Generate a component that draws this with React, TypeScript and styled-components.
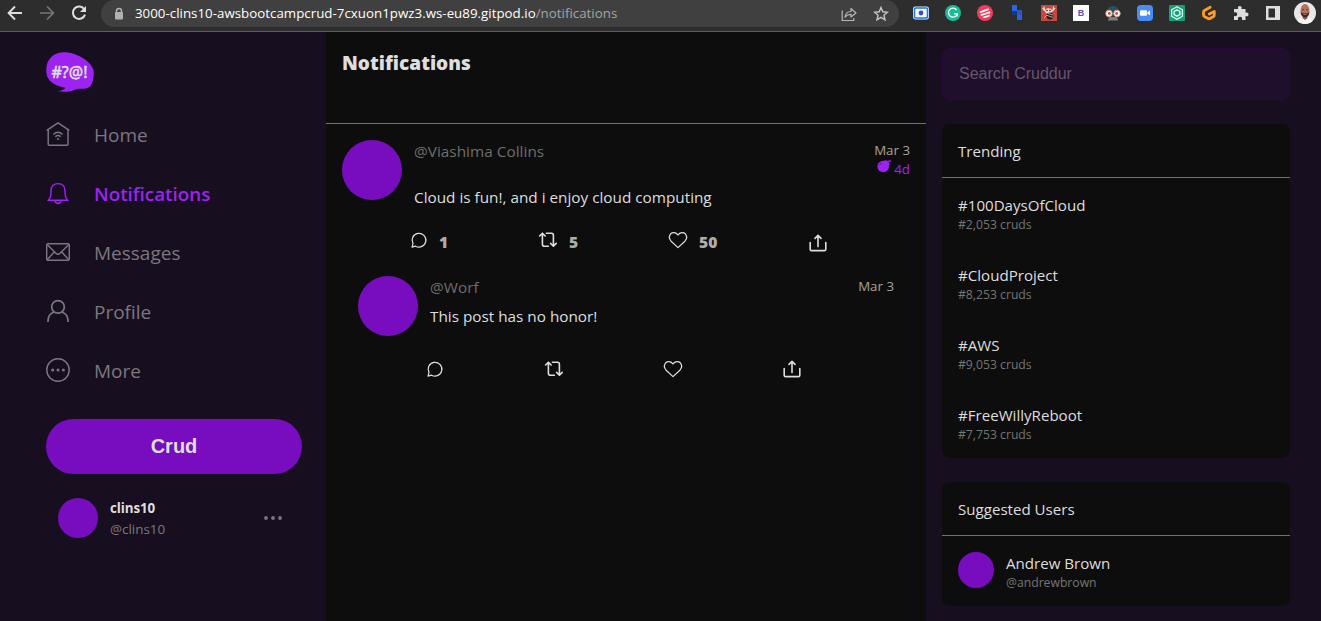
import React from "react";
import styled, { createGlobalStyle } from "styled-components";

const GlobalStyle = createGlobalStyle`
  * { box-sizing: border-box; }
  html, body { margin: 0; background: #170e1f; }
  body { font-family: "Open Sans", "Noto Sans", sans-serif; overflow: hidden; }
  svg { display: block; flex: none; }
`;

const Screen = styled.div`
  width: 1321px;
  height: 621px;
  display: flex;
  flex-direction: column;
  overflow: hidden;
`;

/* ---------- browser bar ---------- */
const BrowserBar = styled.header`
  height: 32px;
  flex: none;
  display: flex;
  align-items: flex-start;
  background: #2d2d2d;
  border-bottom: 1px solid #5d5d5d;
`;
const NavButtons = styled.div`
  width: 101px;
  height: 26px;
  padding-left: 7px;
  display: flex;
  align-items: center;
  gap: 16px;
`;
const AddressBar = styled.div`
  width: 798px;
  height: 27px;
  padding: 0 10px 0 12px;
  display: flex;
  align-items: center;
  background: #404040;
  border-radius: 14px;
`;
const Url = styled.div`
  flex: 1;
  margin-left: 10px;
  padding-bottom: 2px;
  font-size: 13.3px;
  line-height: 24px;
  letter-spacing: 0.02px;
  color: #fff;
  white-space: nowrap;
  span { color: #a5a5a5; }
`;
const AddressActions = styled.div`
  display: flex;
  gap: 16px;
`;
const Extensions = styled.div`
  height: 26px;
  flex: 1;
  padding-left: 13px;
  display: flex;
  align-items: center;
  gap: 14px;
`;
const Ext = styled.div`
  width: 18px;
  height: 18px;
  flex: none;
  display: flex;
  align-items: center;
  justify-content: center;
`;
const LetterTile = styled.div`
  width: 16px;
  height: 16px;
  background: #fff;
  color: #5550b5;
  font: bold 9px/16px "Liberation Sans", sans-serif;
  text-align: center;
`;

/* ---------- page ---------- */
const Page = styled.main`
  flex: 1;
  min-height: 0;
  display: flex;
  background: #170e1f;
`;
const Sidebar = styled.nav`
  width: 326px;
  flex: none;
  padding: 20px 24px 0 46px;
  display: flex;
  flex-direction: column;
`;
const NavList = styled.div`
  margin-top: 14px;
  display: flex;
  flex-direction: column;
`;
const NavItem = styled.a<{ $active?: boolean }>`
  height: 59px;
  display: flex;
  align-items: center;
  gap: 24px;
  font-size: ${p => (p.$active ? "18.8px" : "19px")};
  font-weight: ${p => (p.$active ? 600 : 400)};
  line-height: 27px;
  color: ${p => (p.$active ? "#9d23f0" : "#7c777e")};
  svg { margin-bottom: 3px; }
`;
const CrudButton = styled.button`
  height: 55px;
  margin-top: 18px;
  padding: 0;
  border: 0;
  border-radius: 28px;
  background: #780dc0;
  color: #dedede;
  font: bold 20px/55px "Liberation Sans", sans-serif;
`;
const ProfileBox = styled.div`
  margin-top: 22px;
  padding: 0 20px 0 12px;
  display: flex;
  align-items: center;
`;
const Avatar = styled.div<{ $size: number }>`
  width: ${p => p.$size}px;
  height: ${p => p.$size}px;
  flex: none;
  border-radius: 50%;
  background: #780dc0;
`;
const ProfileText = styled.div`
  flex: 1;
  margin-left: 12px;
  padding-top: 2px;
`;
const DisplayName = styled.div`
  font-size: 13.4px;
  font-weight: 700;
  line-height: 21px;
  letter-spacing: -0.1px;
  color: #dedede;
`;
const ProfileHandle = styled.div`
  font-size: 13.4px;
  line-height: 21px;
  color: #7c777e;
`;

const Feed = styled.section`
  width: 600px;
  flex: none;
  background: #0d0d0d;
`;
const FeedHeading = styled.div`
  height: 92px;
  padding: 16px;
  border-bottom: 1px solid #777067;
  font-size: 19px;
  font-weight: 800;
  line-height: 30px;
  letter-spacing: 0.02px;
  color: #dedede;
`;
const Activity = styled.article<{ $reply?: boolean }>`
  height: ${p => (p.$reply ? 132 : 136)}px;
  padding: ${p => (p.$reply ? "16px 32px 0" : "16px 16px 0")};
  display: flex;
  flex-direction: column;
`;
const ActivityHead = styled.div`
  height: 60px;
  display: flex;
`;
const ActivityBody = styled.div`
  flex: 1;
  margin-left: 12px;
`;
const Handle = styled.div`
  font-size: 15.3px;
  line-height: 23px;
  letter-spacing: 0.04px;
  color: #6e6e6e;
`;
const Message = styled.div<{ $gap: number }>`
  margin-top: ${p => p.$gap}px;
  font-size: 15.3px;
  line-height: 23px;
  color: #dedede;
  white-space: nowrap;
`;
const Times = styled.div`
  padding-top: 1px;
  display: flex;
  flex-direction: column;
  align-items: flex-end;
  font-size: 13.3px;
  line-height: 19px;
  color: #a9a29b;
`;
const Expires = styled.div`
  display: flex;
  gap: 3px;
  color: #9d23f0;
`;
const Actions = styled.div<{ $counts?: boolean }>`
  width: ${p => (p.$counts ? 417 : 375)}px;
  margin: ${p => (p.$counts ? "31px 0 0 68px" : "24px 0 0 68px")};
  height: 24px;
  display: flex;
  justify-content: space-between;
`;
const Action = styled.div<{ $width?: number }>`
  width: ${p => (p.$width ? `${p.$width}px` : "auto")};
  display: flex;
  gap: 11px;
`;
const Count = styled.span`
  font-size: 15.7px;
  font-weight: 800;
  line-height: 22px;
  color: #adadad;
`;
const Drop = styled.span`
  padding-top: 3px;
`;

const Aside = styled.aside`
  flex: 1;
  padding: 16px 31px 0 16px;
`;
const Search = styled.input`
  display: block;
  width: 348px;
  height: 52px;
  padding: 0 16px;
  border: 1px solid #280b3b;
  border-radius: 8px;
  outline: 0;
  background: #200e2d;
  font: 16px "Liberation Sans", sans-serif;
  &::placeholder { color: #645769; opacity: 1; }
`;
const Card = styled.section<{ $height: number }>`
  height: ${p => p.$height}px;
  margin-top: 24px;
  border-radius: 8px;
  background: #0d0d0d;
`;
const CardTitle = styled.div`
  height: 54px;
  padding: 16px 16px 0;
  border-bottom: 1px solid #777067;
  font-size: 15.1px;
  line-height: 23px;
  color: #dedede;
`;
const Trend = styled.div`
  height: 70px;
  padding: 17px 16px 0;
`;
const ItemTitle = styled.div`
  font-size: 15.1px;
  line-height: 21px;
  color: #dedede;
`;
const ItemSub = styled.div`
  font-size: 12.2px;
  line-height: 17px;
  color: #757575;
`;
const Suggested = styled.div`
  padding: 16px;
  display: flex;
  gap: 12px;
`;
const SuggestedText = styled.div`
  padding-top: 1px;
`;

const ReplyIcon = () => (
  <svg width="18" height="18" viewBox="0 0 18 18" fill="none" stroke="#dedede" strokeWidth="1.25" strokeLinejoin="round">
    <path d="M3 12.6A6.9 6.9 0 1 1 5.6 15.2L2 16.1Z" />
  </svg>
);
const RepostIcon = () => (
  <svg width="20" height="18" viewBox="0 0 20 18" fill="none" stroke="#dedede" strokeWidth="1.6" strokeLinecap="round" strokeLinejoin="round">
    <path d="M1.6 5L4.4 2.2L7.2 5M4.4 2.6V13.2Q4.4 15.2 6.4 15.2H10.4" />
    <path d="M8.4 2.2H13.4Q15.4 2.2 15.4 4.2V14.8M12.6 12.4L15.4 15.2L18.2 12.4" />
  </svg>
);
const HeartIcon = () => (
  <svg width="20" height="18" viewBox="0 0 20 18" fill="none" stroke="#dedede" strokeWidth="1.25" strokeLinejoin="round">
    <path d="M10 4C8 .9 4.5 1 2.7 2.8C.9 5 1.1 8 3.1 10.2L10 16.6L16.9 10.2C18.9 8 19.1 5 17.3 2.8C15.5 1 12 .9 10 4Z" />
  </svg>
);
const ShareIcon = () => (
  <svg width="18" height="18" viewBox="0 0 18 18" fill="none" stroke="#dedede" strokeWidth="1.6" strokeLinecap="round" strokeLinejoin="round">
    <path d="M1.2 8.5V15.2Q1.2 16.6 2.6 16.6H15.4Q16.8 16.6 16.8 15.2V8.5M9 12.6V1.6M6 4.4L9 1.4L12 4.4" />
  </svg>
);
const BombIcon = () => (
  <svg width="14" height="14" viewBox="0 0 14 14" fill="#9d23f0">
    <circle cx="6.2" cy="6.5" r="5.8" />
    <path d="M7 .5L9.6 .2L12.6 3L12.2 6L10.6 7Z" />
    <path d="M10 2.2Q11 .6 13.9 1.1" fill="none" stroke="#9d23f0" strokeWidth="1.5" />
    <path d="M2.4 5.6Q3 3.4 5 3" fill="none" stroke="#5a128c" strokeWidth=".9" />
  </svg>
);

const Logo = () => (
  <svg width="48" height="40" viewBox="0 0 48 40">
    <path d="M17 .2C28-.7 45 8 47.6 18.5C48 25 47 32 43.4 35C39 37.8 34 36.2 30 37.2C24 40.2 17 40 11.4 39.2C15 38.8 18.5 37.5 19.2 35.7C11 34.5 3.5 30.5 1 24C-1.8 11 4 1.2 17 .2Z" fill="#9d23f0" />
    <text x="5.5" y="26" textLength="36" lengthAdjust="spacingAndGlyphs" fill="#dedede" stroke="#dedede" strokeWidth=".6" fontFamily="Noto Sans" fontSize="17" fontWeight="400">#?@!</text>
  </svg>
);

const navIcons: Record<string, React.ReactNode> = {
  Home: (
    <>
      <path d="M.7 8.4L12 .9L23.3 8.4M2.2 7.5V22.2Q2.2 23.2 3.2 23.2H21Q22 23.2 22 22.2V7.5" />
      <path d="M7.4 12.5Q12 8.2 16.6 12.5M9.3 14.8Q12 12.4 14.7 14.8" />
      <circle cx="12" cy="17" r="1" fill="currentColor" stroke="none" />
    </>
  ),
  Notifications: (
    <g transform="translate(0 .8)">
      <path d="M2.5 18.4C4.5 16.2 5 14.5 5 11V9C5 4.6 7.6 1.8 12 1.8S19 4.6 19 9V11C19 14.5 19.5 16.2 21.5 18.4Z" />
      <path d="M9 18.8Q9.4 21.7 12 21.7T15 18.8" />
    </g>
  ),
  Messages: (
    <>
      <rect x=".7" y="3.7" width="22.6" height="16.6" rx="1.4" />
      <path d="M1.2 4.4L9.9 13.2Q12 15.2 14.1 13.2L22.8 4.4M1.2 19.7L8.5 11.8M22.8 19.7L15.5 11.8" />
    </>
  ),
  Profile: (
    <g strokeWidth="1.7" transform="translate(0 .6)">
      <circle cx="12" cy="7.3" r="6.3" />
      <path d="M1.9 22.3C1.9 17 4.4 13.5 8.2 12.4M22.1 22.3C22.1 17 19.6 13.5 15.8 12.4" />
    </g>
  ),
  More: (
    <>
      <circle cx="12" cy="12" r="11.2" />
      <g fill="currentColor" stroke="none">
        <circle cx="6.6" cy="12" r="1.5" /><circle cx="12" cy="12" r="1.5" /><circle cx="17.4" cy="12" r="1.5" />
      </g>
    </>
  ),
};

const NavIcon = ({ name }: { name: string }) => (
  <svg width="24" height="24" viewBox="0 0 24 24" fill="none" stroke="currentColor" strokeWidth="1.45">
    {navIcons[name]}
  </svg>
);

const trends = [
  ["#100DaysOfCloud", "#2,053 cruds"],
  ["#CloudProject", "#8,253 cruds"],
  ["#AWS", "#9,053 cruds"],
  ["#FreeWillyReboot", "#7,753 cruds"],
];

const Chrome = () => (
  <BrowserBar>
    <NavButtons>
      <svg width="16" height="16" viewBox="0 0 16 16" fill="none" stroke="#dfdfdf" strokeWidth="1.9"><path d="M15 8H2M8 1.5L1.6 8L8 14.5" /></svg>
      <svg width="16" height="16" viewBox="0 0 16 16" fill="none" stroke="#777" strokeWidth="1.7"><path d="M1 8H14M8 1.5L14.4 8L8 14.5" /></svg>
      <svg width="16" height="16" viewBox="0 0 16 16" fill="none" stroke="#dfdfdf" strokeWidth="2"><path d="M13.4 4.5A6.2 6.2 0 1 0 14 9.6" /><path d="M15 1V7H9Z" fill="#dfdfdf" stroke="none" /></svg>
    </NavButtons>
    <AddressBar>
      <svg width="12" height="14" viewBox="0 0 12 14"><path d="M3.5 6V4A2.5 2.5 0 0 1 8.5 4V6" fill="none" stroke="#aeb1b5" strokeWidth="1.5" /><rect x="2" y="5" width="8" height="7.5" rx="1" fill="#aeb1b5" /></svg>
      <Url>3000-clins10-awsbootcampcrud-7cxuon1pwz3.ws-eu89.gitpod.io<span>/notifications</span></Url>
      <AddressActions>
        <svg width="16" height="16" viewBox="0 0 16 16" fill="none" stroke="#b5b5b5" strokeWidth="1.2" strokeLinejoin="round"><path d="M1.2 4.5V14.5H12.8V12M4 11C4.5 7.5 6.5 5.5 10 5.5V2.5L15 7L10 11V8.3C7.3 8.3 5.5 9.2 4 11Z" /></svg>
        <svg width="16" height="16" viewBox="0 0 16 16" fill="none" stroke="#c5c5c5" strokeWidth="1.4"><path d="M8 1.5L9.8 5.8L14.5 6.2L10.9 9.2L12 13.8L8 11.3L4 13.8L5.1 9.2L1.5 6.2L6.2 5.8Z" /></svg>
      </AddressActions>
    </AddressBar>
    <Extensions>
      <Ext><svg width="16" height="14" viewBox="0 0 16 14"><rect y=".6" width="16" height="12.8" rx="2.4" fill="#e8f2ff" /><rect x="1.5" y="2" width="13" height="10" rx="1.2" fill="#f5faff" stroke="#1878ee" strokeWidth="1.6" /><circle cx="8" cy="7" r="2.4" fill="#4649ba" /></svg></Ext>
      <Ext><svg width="16" height="16" viewBox="0 0 16 16"><circle cx="8" cy="8" r="8" fill="#18bd98" /><path d="M11.6 5A4.5 4.5 0 1 0 12.3 8.8H9M12.3 8.2V11.5" fill="none" stroke="#fff" strokeWidth="1.3" /></svg></Ext>
      <Ext><svg width="16" height="16" viewBox="0 0 16 16"><circle cx="8" cy="8" r="8" fill="#f8395c" /><path d="M2.6 6.6L11.4 3.2L12 5L3.2 8.2ZM3.4 9.4L13 6.2L13.4 8L4 11.1ZM5.4 12L13 9.6L12.4 11.4L7 13.2Z" fill="#fff" /></svg></Ext>
      <Ext><svg width="12" height="16" viewBox="0 0 12 16"><path d="M1 0H6V6H1Z" fill="#2466e5" /><path d="M6 5H11V10H6Z" fill="#3158b7" /><path d="M1 6H6V10H1Z" fill="#1c377b" /><path d="M6 10H11V15H6Z" fill="#2860df" /></svg></Ext>
      <Ext><svg width="16" height="16" viewBox="0 0 16 16"><rect width="16" height="16" fill="#c7473b" /><path d="M1.5 3L3.5 5.5L6 6.5M14 3L12 5.5L10 6.5M3 1.5L3.5 5M12.5 1.5L12 5" stroke="#f3d9d3" strokeWidth="1.2" fill="none" /><ellipse cx="7.5" cy="6" rx="3.4" ry="2.8" fill="#f3d9d3" /><circle cx="6" cy="5.5" r=".8" fill="#28201f" /><circle cx="9" cy="5.5" r=".8" fill="#28201f" /><ellipse cx="9" cy="11" rx="3.4" ry="3.6" fill="#28201f" /><path d="M6 10.4L12 12.4M7 8.4L12 10M3 13L6 10" stroke="#e8bcae" strokeWidth=".8" /></svg></Ext>
      <Ext><LetterTile>B</LetterTile></Ext>
      <Ext><svg width="16" height="16" viewBox="0 0 16 16"><path d="M2 8Q2 1 8 1T14 8V11H2Z" fill="#285260" /><path d="M4 12H12L13 15.5H3Z" fill="#79807d" /><circle cx="4" cy="8.5" r="3.2" fill="#fff" stroke="#e0a58f" /><circle cx="12" cy="8.5" r="3.2" fill="#fff" stroke="#e0a58f" /><circle cx="4.4" cy="8.5" r="1.4" fill="#c64c35" /><circle cx="11.6" cy="8.5" r="1.4" fill="#c64c35" /></svg></Ext>
      <Ext><svg width="16" height="16" viewBox="0 0 16 16"><rect width="16" height="16" rx="4" fill="#468df4" /><rect x="3" y="5.2" width="7" height="5.6" rx="1.2" fill="#fff" /><path d="M10.5 7.2L13 5.4V10.6L10.5 8.8Z" fill="#fff" /></svg></Ext>
      <Ext><svg width="16" height="16" viewBox="0 0 16 16" fill="none" stroke="#d8fff1"><rect width="16" height="16" rx="1" fill="#149e79" stroke="none" /><path d="M8 1.7L13.4 4.8V11.2L8 14.3L2.6 11.2V4.8Z" strokeWidth="1.3" /><path d="M8 4.8L10.9 6.4V9.6L8 11.2L5.1 9.6V6.4Z" strokeWidth="1.4" /></svg></Ext>
      <Ext><svg width="16" height="16" viewBox="0 0 16 16" fill="none" stroke="#ff9c23" strokeWidth="2.8" strokeLinecap="round" strokeLinejoin="round"><path d="M9.2 2.3L3.4 5.4Q2.5 6 2.5 7V10Q2.5 11 3.4 11.5L7 13.5Q8 14 9 13.5L12.5 11.5Q13.3 11 13.3 10V6.5L8.2 9" /></svg></Ext>
      <Ext><svg width="16" height="16" viewBox="0 0 16 16"><path d="M1 4H5.2C4.4 2.4 5.2 1 6.8 1S9.2 2.4 8.4 4H12.5V7.8C14 7 15.5 7.8 15.5 9.4S14 11.8 12.5 11V15H9C9.6 13 8.6 11.8 7 11.8S4.5 13 5 15H1V11C3 11.5 4.2 10.7 4.2 9.2S3 6.9 1 7.5Z" fill="#dedede" /></svg></Ext>
      <Ext><svg width="14" height="14" viewBox="0 0 14 14"><path fillRule="evenodd" d="M0 0H14V14H0ZM2.5 2.5V11.5H9V2.5Z" fill="#dedede" /></svg></Ext>
      <Ext><svg width="22" height="22" viewBox="0 0 22 22"><circle cx="11" cy="11" r="11" fill="#e8e8e9" /><path d="M3.3 18.7Q5 15.5 8 15H14Q17 15.5 18.7 18.7A11 11 0 0 1 3.3 18.7Z" fill="#f7f7f7" /><path d="M8.5 13H13.5V16L11 18L8.5 16Z" fill="#8b5549" /><ellipse cx="11" cy="8.5" rx="4.5" ry="6.5" fill="#b07462" /><path d="M6.6 9.6Q7.5 11.6 9 11.4H13Q14.5 11.6 15.4 9.6Q15.2 15.3 11 15.3T6.6 9.6Z" fill="#3b2525" /><path d="M9.4 12.6H12.6" stroke="#b07462" /><path d="M8.2 7.6H10M12 7.6H13.8" stroke="#4b2c28" strokeWidth=".8" /></svg></Ext>
    </Extensions>
  </BrowserBar>
);

export default function App() {
  return (
    <Screen>
      <GlobalStyle />
      <Chrome />
      <Page>
        <Sidebar>
          <Logo />
          <NavList>
            {["Home", "Notifications", "Messages", "Profile", "More"].map(name => (
              <NavItem key={name} $active={name === "Notifications"}>
                <NavIcon name={name} />
                {name}
              </NavItem>
            ))}
          </NavList>
          <CrudButton>Crud</CrudButton>
          <ProfileBox>
            <Avatar $size={40} />
            <ProfileText>
              <DisplayName>clins10</DisplayName>
              <ProfileHandle>@clins10</ProfileHandle>
            </ProfileText>
            <svg width="18" height="4" viewBox="0 0 18 4" fill="#7c777e"><circle cx="2" cy="2" r="1.9" /><circle cx="9" cy="2" r="1.9" /><circle cx="16" cy="2" r="1.9" /></svg>
          </ProfileBox>
        </Sidebar>

        <Feed>
          <FeedHeading>Notifications</FeedHeading>
          <Activity>
            <ActivityHead>
              <Avatar $size={60} />
              <ActivityBody>
                <Handle>@Viashima Collins</Handle>
                <Message $gap={23}>Cloud is fun!, and i enjoy cloud computing</Message>
              </ActivityBody>
              <Times>
                <div>Mar 3</div>
                <Expires><BombIcon />4d</Expires>
              </Times>
            </ActivityHead>
            <Actions $counts>
              <Action $width={128}><ReplyIcon /><Count>1</Count></Action>
              <Action $width={130}><RepostIcon /><Count>5</Count></Action>
              <Action $width={141}><HeartIcon /><Count>50</Count></Action>
              <Action><Drop><ShareIcon /></Drop></Action>
            </Actions>
          </Activity>
          <Activity $reply>
            <ActivityHead>
              <Avatar $size={60} />
              <ActivityBody>
                <Handle>@Worf</Handle>
                <Message $gap={6}>This post has no honor!</Message>
              </ActivityBody>
              <Times>
                <div>Mar 3</div>
              </Times>
            </ActivityHead>
            <Actions>
              <ReplyIcon />
              <RepostIcon />
              <HeartIcon />
              <ShareIcon />
            </Actions>
          </Activity>
        </Feed>

        <Aside>
          <Search placeholder="Search Cruddur" />
          <Card $height={334}>
            <CardTitle>Trending</CardTitle>
            {trends.map(([tag, count]) => (
              <Trend key={tag}>
                <ItemTitle>{tag}</ItemTitle>
                <ItemSub>{count}</ItemSub>
              </Trend>
            ))}
          </Card>
          <Card $height={124}>
            <CardTitle>Suggested Users</CardTitle>
            <Suggested>
              <Avatar $size={36} />
              <SuggestedText>
                <ItemTitle>Andrew Brown</ItemTitle>
                <ItemSub>@andrewbrown</ItemSub>
              </SuggestedText>
            </Suggested>
          </Card>
        </Aside>
      </Page>
    </Screen>
  );
}
